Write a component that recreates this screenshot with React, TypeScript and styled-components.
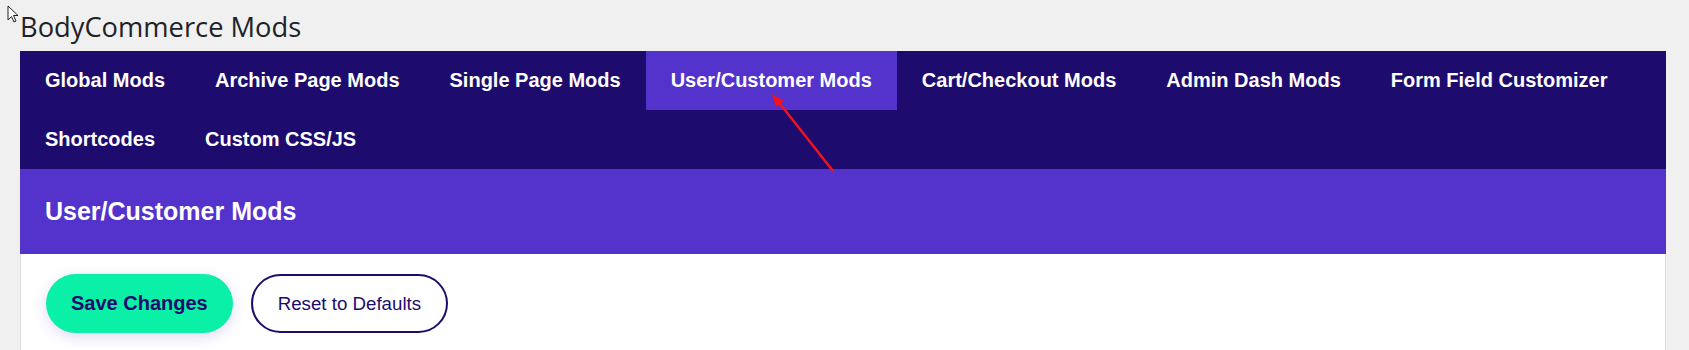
import React from "react";
import styled, { createGlobalStyle } from "styled-components";

const GlobalStyle = createGlobalStyle`
  html, body {
    margin: 0;
    padding: 0;
    background: #f0f0f0;
  }
  body {
    font-family: "Liberation Sans", Arial, sans-serif;
  }
`;

const Page = styled.div`
  position: relative;
  padding: 8px 23px 0 20px;
`;

const Title = styled.h1`
  margin: 0;
  height: 43px;
  font-family: "Open Sans", "Noto Sans", sans-serif;
  font-weight: 400;
  font-size: 27.3px;
  line-height: 38px;
  color: #1d2327;
`;

const Nav = styled.nav`
  display: flex;
  flex-wrap: wrap;
  background: #1d0c6d;
`;

const Tab = styled.a<{ $active?: boolean }>`
  display: flex;
  align-items: center;
  height: 59px;
  padding: 0 25px;
  font-family: "Liberation Sans", Arial, sans-serif;
  font-weight: 700;
  font-size: 20px;
  color: #ffffff;
  text-decoration: none;
  background: ${(p) => (p.$active ? "#5432cc" : "transparent")};
  cursor: pointer;
`;

const Header = styled.div`
  display: flex;
  align-items: center;
  height: 85px;
  padding: 0 25px;
  background: #5432cc;
  color: #ffffff;
  font-family: "Liberation Sans", Arial, sans-serif;
  font-weight: 700;
  font-size: 25px;
`;

const Body = styled.div`
  display: flex;
  gap: 18px;
  padding: 20px 25px 40px;
  background: #ffffff;
  border-left: 1px solid #dcdcdc;
  border-right: 1px solid #dcdcdc;
`;

const PillButton = styled.button<{ $primary?: boolean }>`
  height: 59px;
  padding: 0 25px;
  border-radius: 30px;
  font-family: "Liberation Sans", Arial, sans-serif;
  font-size: ${(p) => (p.$primary ? "20px" : "18.7px")};
  font-weight: ${(p) => (p.$primary ? 700 : 400)};
  color: #1d0c6d;
  background: ${(p) => (p.$primary ? "#0af0a6" : "#ffffff")};
  border: ${(p) => (p.$primary ? "none" : "2px solid #1d0c6d")};
  box-shadow: ${(p) =>
    p.$primary ? "0 4px 14px rgba(84, 50, 204, 0.18)" : "none"};
  cursor: pointer;
`;

const Arrow = styled.svg`
  position: absolute;
  left: 760px;
  top: 85px;
  pointer-events: none;
`;

const Cursor = styled.svg`
  position: absolute;
  left: 7px;
  top: 5px;
  pointer-events: none;
`;

const tabs = [
  "Global Mods",
  "Archive Page Mods",
  "Single Page Mods",
  "User/Customer Mods",
  "Cart/Checkout Mods",
  "Admin Dash Mods",
  "Form Field Customizer",
  "Shortcodes",
  "Custom CSS/JS",
];

export default function App() {
  const active = "User/Customer Mods";
  return (
    <>
      <GlobalStyle />
      <Page>
        <Title>BodyCommerce Mods</Title>
        <Nav>
          {tabs.map((t) => (
            <Tab key={t} $active={t === active}>
              {t}
            </Tab>
          ))}
        </Nav>
        <Header>User/Customer Mods</Header>
        <Body>
          <PillButton $primary>Save Changes</PillButton>
          <PillButton>Reset to Defaults</PillButton>
        </Body>
        <Cursor width="12" height="19" viewBox="0 0 12 19">
          <path
            d="M1 1 L1 15 L4.5 11.5 L7 17 L9 16 L6.5 10.5 L11 10.5 Z"
            fill="#ffffff"
            stroke="#222"
            strokeWidth="1"
            strokeLinejoin="round"
          />
        </Cursor>
        <Arrow width="80" height="95" viewBox="0 0 80 95">
          <line
            x1="73"
            y1="86"
            x2="17"
            y2="15"
            stroke="#f0121e"
            strokeWidth="2.5"
            strokeLinecap="round"
          />
          <polygon points="12,9 24,16 16,22" fill="#f0121e" />
        </Arrow>
      </Page>
    </>
  );
}
